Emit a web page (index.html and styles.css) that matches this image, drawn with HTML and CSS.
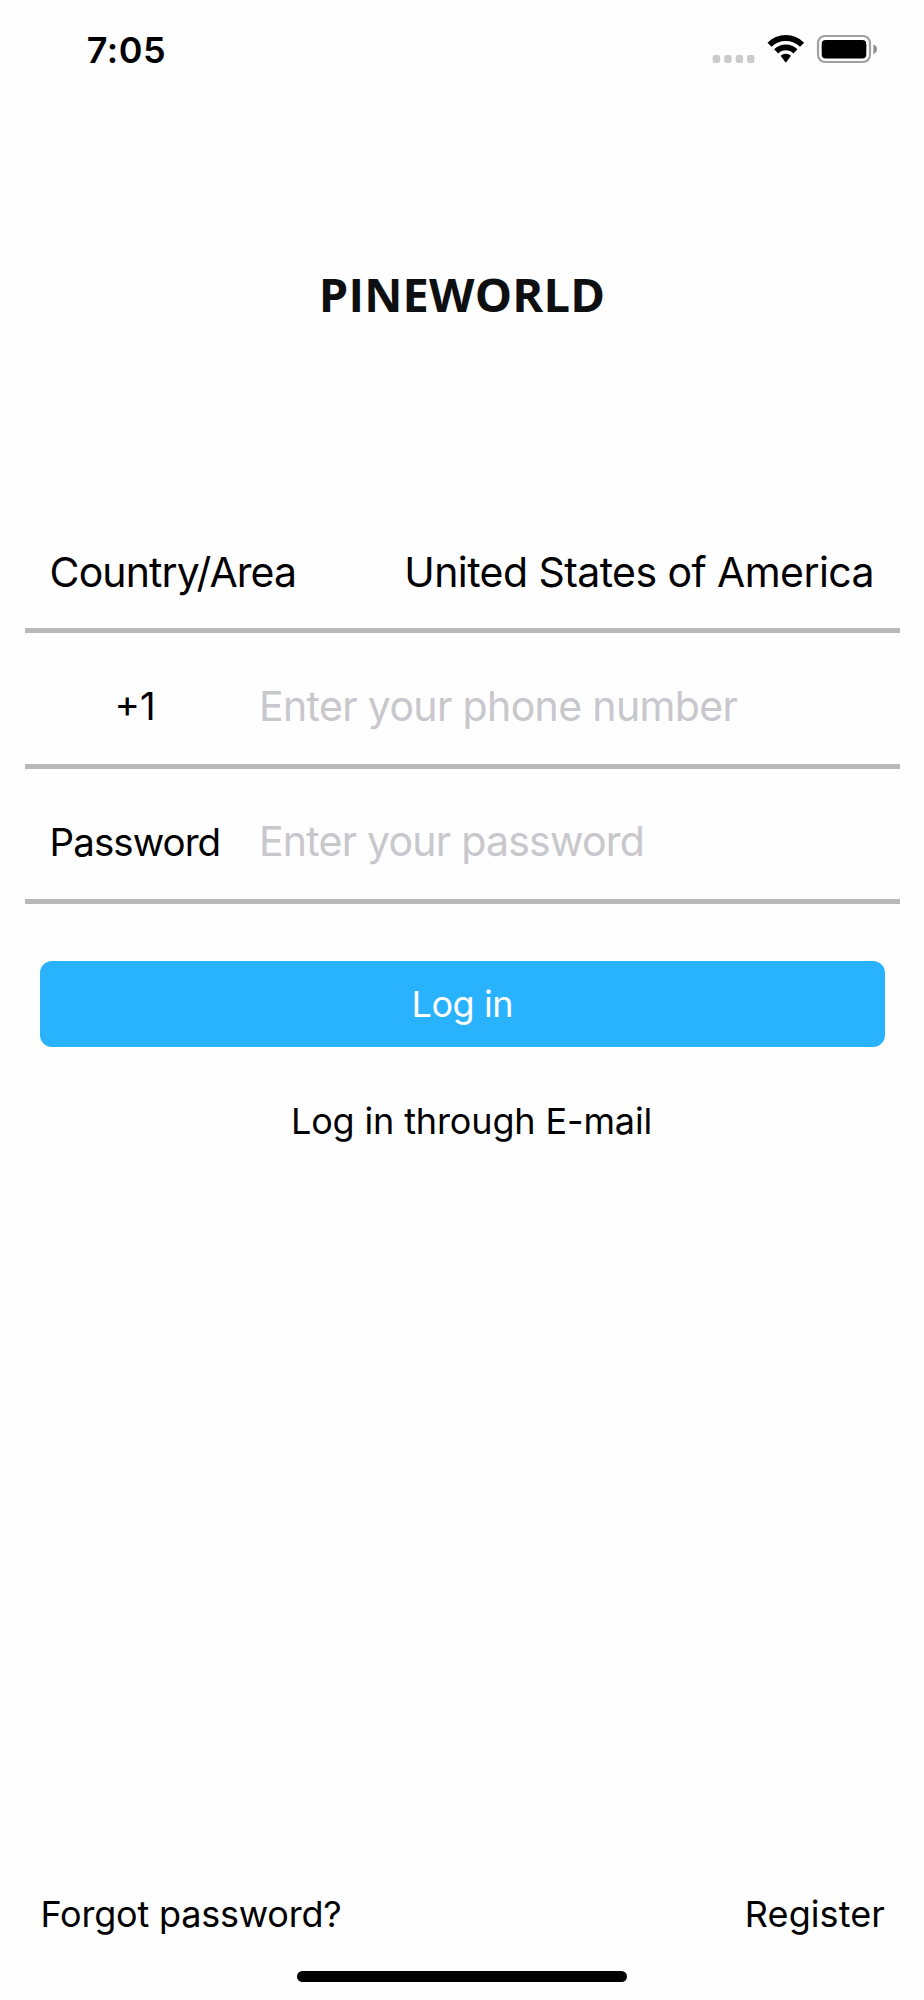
FILE: index.html
```html
<!DOCTYPE html>
<html lang="en">
<head>
<meta charset="utf-8">
<title>PINEWORLD</title>
<link rel="stylesheet" href="styles.css">
</head>
<body>
<div class="screen">
  <header class="status-bar">
    <span class="clock">7:05</span>
    <svg class="status-icons" width="184" height="40" viewBox="0 0 184 40" aria-hidden="true">
      <g fill="#cbcbcb">
        <rect x="12.7" y="25" width="7.4" height="7.9" rx="2.2"/>
        <rect x="24.2" y="25" width="7.4" height="7.9" rx="2.2"/>
        <rect x="35.7" y="25" width="7.4" height="7.9" rx="2.2"/>
        <rect x="47" y="25" width="7.4" height="7.9" rx="2.2"/>
      </g>
      <g transform="translate(85.8 31)">
        <g fill="none" stroke="#000" stroke-width="5.8">
          <path d="M-16.26 -16.26 A23 23 0 0 1 16.26 -16.26"/>
          <path d="M-9.62 -9.62 A13.6 13.6 0 0 1 9.62 -9.62"/>
        </g>
        <path d="M-5.2 -5.2 A7.35 7.35 0 0 1 5.2 -5.2 L0.6 0.9 Q0 1.5 -0.6 0.9 Z"/>
      </g>
      <rect x="118" y="6" width="52" height="26" rx="7" fill="none" stroke="#a0a0a0" stroke-width="2.2"/>
      <rect x="121.7" y="10" width="44.6" height="18.5" rx="4"/>
      <path d="M173.3 14.3 Q177 16 177 19.3 Q177 22.6 173.3 24.3 Z" fill="#909090"/>
    </svg>
  </header>
  <h1 class="brand">PINEWORLD</h1>
  <main class="form">
    <div class="row country">
      <span class="label wide">Country/Area</span>
      <span class="value">United States of America</span>
    </div>
    <div class="row phone">
      <span class="label code">+1</span>
      <span class="hint long">Enter your phone number</span>
    </div>
    <div class="row pass">
      <span class="label">Password</span>
      <span class="hint">Enter your password</span>
    </div>
    <button class="login" type="button">Log in</button>
    <a class="email">Log in through E-mail</a>
  </main>
  <footer class="footer">
    <a class="forgot">Forgot password?</a>
    <a class="register">Register</a>
  </footer>
  <div class="home-bar"></div>
</div>
</body>
</html>
```
FILE: styles.css
```css
* { box-sizing: border-box; }
body { margin: 0; background: #fefefe; color: #000; font-family: Inter, "Liberation Sans", sans-serif; }
.screen { height: 2000px; display: flex; flex-direction: column; overflow: hidden; }
.status-bar { display: flex; justify-content: space-between; height: 100px; padding: 30px 40px 0 86.7px; }
.clock { font-size: 36px; font-weight: 600; line-height: 40px; letter-spacing: 0.5px; }
.status-icons { display: block; }
.brand { margin: 159px 0 0; height: 70px; text-align: center; font: bold 47px/70px "Open Sans", sans-serif; letter-spacing: 0.2px; color: #0e0f11; }
.form { display: flex; flex-direction: column; margin-top: 186px; }
.row { display: flex; align-items: center; margin: 0 24px 0 25px; padding: 14px 26px 0 24.6px; height: 135px; border-bottom: 5px solid #b8b8b8; font-size: 41px; white-space: nowrap; }
.country { height: 118px; padding-top: 1px; justify-content: space-between; }
.phone { height: 136px; }
.label { width: 209.4px; padding-top: 1px; font-size: 38.5px; letter-spacing: -0.95px; }
.wide { padding-top: 0; font-size: 41px; letter-spacing: -0.9px; }
.value { letter-spacing: -0.57px; margin-right: 0; }
.code { padding-left: 65px; letter-spacing: 0; }
.hint { color: #c8c7cc; letter-spacing: -0.78px; }
.long { letter-spacing: -0.65px; }
.login { margin: 57px 39px 0 39.5px; height: 86px; padding: 0; border: 0; border-radius: 12px; background: #29b3ff; color: #fff; font: 36px Inter, "Liberation Sans", sans-serif; letter-spacing: -0.45px; }
.email { margin: 52px 0 0 19px; text-align: center; font-size: 36px; letter-spacing: -0.14px; }
.footer { margin-top: auto; display: flex; justify-content: space-between; padding: 0 39px 0 40.5px; font-size: 36px; }
.forgot { letter-spacing: -0.21px; }
.register { letter-spacing: 0.1px; }
.home-bar { width: 330px; height: 11px; border-radius: 6px; background: #000; margin: 35px auto 18px; flex: none; }
```
